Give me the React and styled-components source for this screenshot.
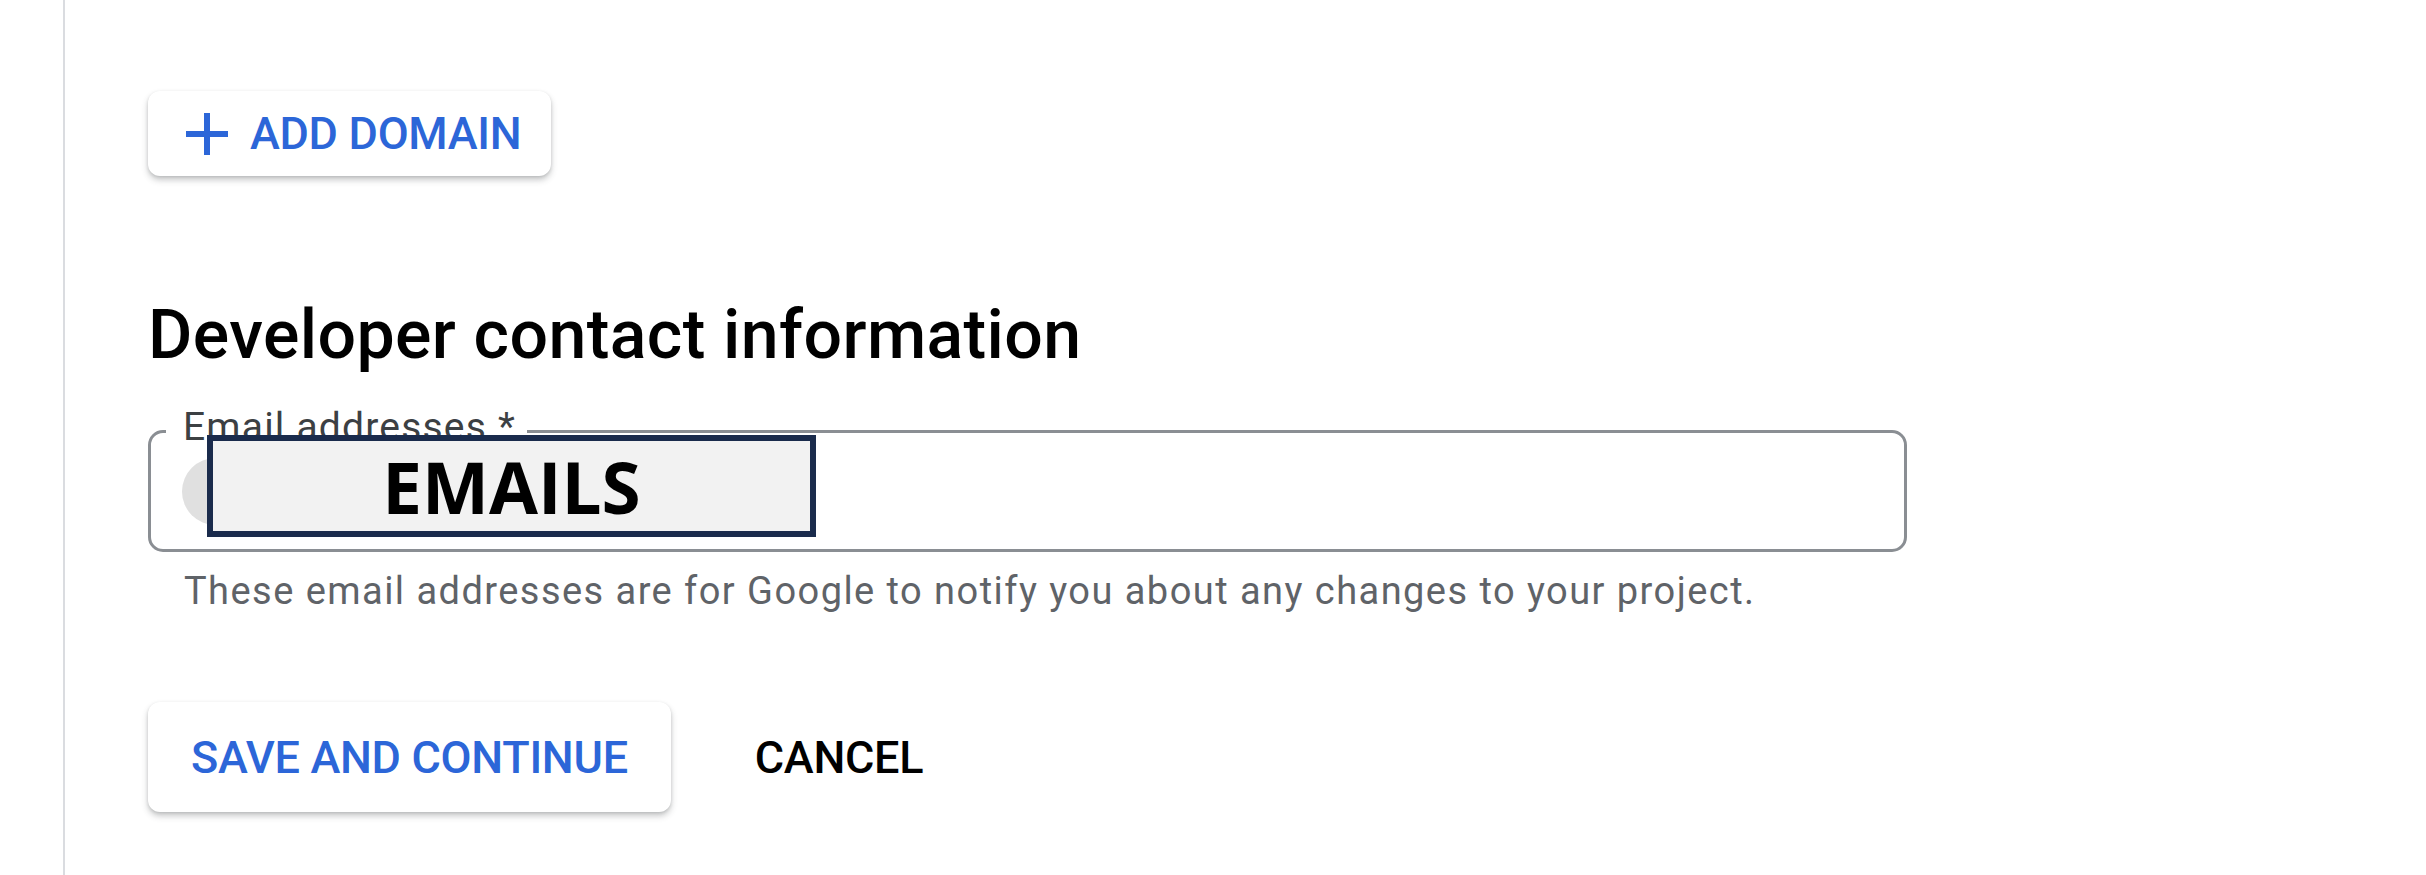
import React from "react";
import styled, { createGlobalStyle } from "styled-components";

const Global = createGlobalStyle`
  html, body { margin: 0; padding: 0; background: #ffffff; }
  body { font-family: Roboto, "Liberation Sans", Arial, sans-serif; }
  * { box-sizing: border-box; }
`;

const BLUE = "#2c66d8";

const Page = styled.div`
  display: flex;
  min-height: 100vh;
  background: #ffffff;
`;

const Rail = styled.div`
  width: 65px;
  flex: none;
  border-right: 2px solid #dadce0;
`;

const Content = styled.main`
  flex: 1;
  display: flex;
  flex-direction: column;
  align-items: flex-start;
  padding: 91px 0 0 83px;
`;

const RaisedButton = styled.button`
  display: inline-flex;
  align-items: center;
  gap: ${(p) => p.$gap || 0}px;
  height: ${(p) => p.$h}px;
  padding: 0 ${(p) => p.$pr}px 0 ${(p) => p.$pl}px;
  border: none;
  border-radius: 12px;
  background: #ffffff;
  color: ${BLUE};
  font-family: Roboto, "Liberation Sans", Arial, sans-serif;
  font-weight: 500;
  font-size: 45px;
  line-height: 1;
  letter-spacing: -0.3px;
  box-shadow: 0 4px 6px rgba(60, 64, 67, 0.28), 0 1px 3px rgba(60, 64, 67, 0.15);
  cursor: pointer;
`;

const TextButton = styled.button`
  display: inline-flex;
  align-items: center;
  height: 110px;
  padding: 0 42px;
  border: none;
  background: transparent;
  color: #000000;
  font-family: Roboto, "Liberation Sans", Arial, sans-serif;
  font-weight: 500;
  font-size: 45px;
  line-height: 1;
  letter-spacing: -0.3px;
  cursor: pointer;
`;

const Heading = styled.h2`
  margin: 125px 0 0 0;
  font-family: Roboto, "Liberation Sans", Arial, sans-serif;
  font-weight: 500;
  font-size: 68px;
  line-height: 1;
  color: #000000;
  letter-spacing: 0.4px;
`;

const Field = styled.div`
  position: relative;
  margin-top: 61px;
  width: 1759px;
`;

const Outline = styled.div`
  height: 122px;
  border: 3px solid #8a8e93;
  border-radius: 15px;
  display: flex;
  align-items: center;
  padding-left: 31px;
`;

const FloatingLabel = styled.label`
  position: absolute;
  left: 18px;
  top: -25px;
  padding: 0 11px 0 17px;
  background: #ffffff;
  font-family: Roboto, "Liberation Sans", Arial, sans-serif;
  font-size: 39px;
  line-height: 44px;
  letter-spacing: 1.2px;
  color: #3c4043;
`;

const Chip = styled.div`
  width: 420px;
  height: 67px;
  border-radius: 34px;
  background: #e0e0e0;
`;

const Redaction = styled.div`
  position: absolute;
  left: 59px;
  top: 5px;
  width: 609px;
  height: 102px;
  border: 6px solid #1a2b4c;
  background: #f2f2f2;
  display: flex;
  align-items: center;
  justify-content: center;
  font-family: "Open Sans", "Liberation Sans", Arial, sans-serif;
  font-weight: 700;
  font-size: 71px;
  line-height: 1;
  color: #000000;
`;

const Helper = styled.p`
  margin: 20px 0 0 36px;
  font-family: Roboto, "Liberation Sans", Arial, sans-serif;
  font-size: 38px;
  line-height: 1;
  color: #5f6368;
  letter-spacing: 1.45px;
`;

const Actions = styled.div`
  display: flex;
  align-items: center;
  gap: 42px;
  margin-top: 92px;
`;

const PlusIcon = () => (
  <svg width="42" height="42" viewBox="0 0 42 42" aria-hidden="true">
    <path d="M21 0V42M0 21H42" stroke={BLUE} strokeWidth="6" fill="none" />
  </svg>
);

export default function App() {
  return (
    <>
      <Global />
      <Page>
        <Rail />
        <Content>
          <RaisedButton $h={85} $pl={38} $pr={30} $gap={22}>
            <PlusIcon />
            ADD DOMAIN
          </RaisedButton>
          <Heading>Developer contact information</Heading>
          <Field>
            <Outline>
              <Chip />
            </Outline>
            <FloatingLabel>Email addresses *</FloatingLabel>
            <Redaction>EMAILS</Redaction>
          </Field>
          <Helper>
            These email addresses are for Google to notify you about any changes to your project.
          </Helper>
          <Actions>
            <RaisedButton $h={110} $pl={43} $pr={43}>
              SAVE AND CONTINUE
            </RaisedButton>
            <TextButton>CANCEL</TextButton>
          </Actions>
        </Content>
      </Page>
    </>
  );
}
